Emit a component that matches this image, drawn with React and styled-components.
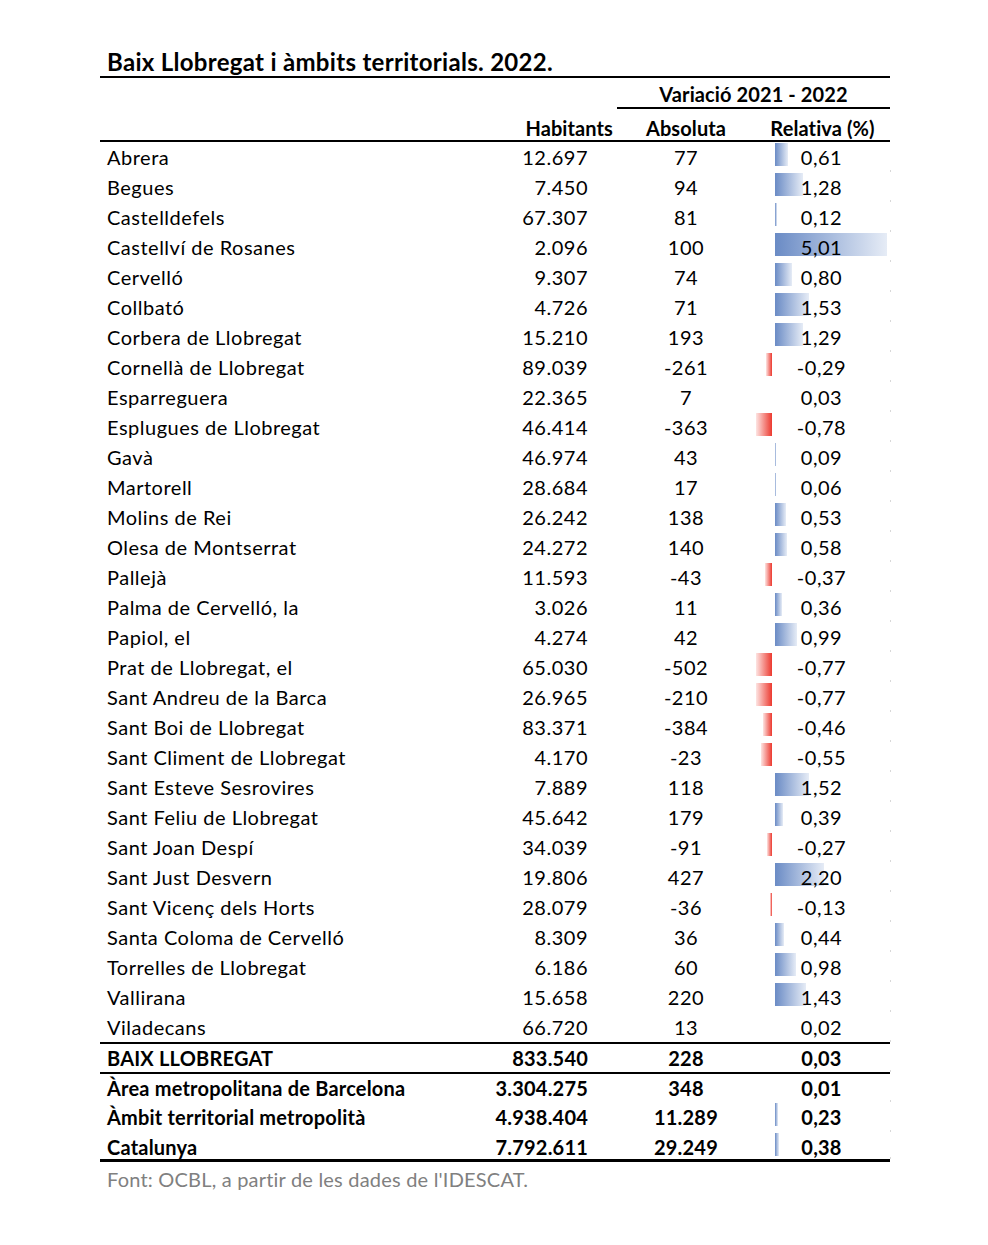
import React from "react";
import styled, { createGlobalStyle } from "styled-components";

const Global = createGlobalStyle`
  html, body { margin: 0; padding: 0; background: #fff; }
  body { font-family: Lato, "Open Sans", "Liberation Sans", sans-serif; color: #000; }
`;

const Page = styled.div`
  width: 988px;
  min-height: 1245px;
  padding-left: 100px;
  box-sizing: border-box;
`;

const Sheet = styled.div`
  width: 790px;
`;

const Title = styled.div`
  padding: 48px 0 0 7px;
  height: 28px;
  line-height: 28px;
  font-size: 24px;
  font-weight: 700;
  letter-spacing: 0.3px;
  border-bottom: 2px solid #000;
`;

const Grid = styled.div`
  display: grid;
  grid-template-columns: 382px 135px 138px 135px;
`;

const Group = styled.div`
  grid-column: 3 / 5;
  height: 26px;
  padding-top: 3px;
  line-height: 26px;
  text-align: center;
  font-size: 20px;
  font-weight: 700;
  letter-spacing: 0.1px;
  border-bottom: 2px solid #000;
`;

const Spacer = styled.div`
  grid-column: 1 / 3;
`;

const HeadRow = styled.div`
  grid-column: 1 / 5;
  display: grid;
  grid-template-columns: subgrid;
  height: 24px;
  padding-top: 7px;
  line-height: 24px;
  border-bottom: 2px solid #000;
`;

const HeadCell = styled.div`
  font-size: 20px;
  font-weight: 700;
  letter-spacing: 0.1px;
  text-align: ${(p) => p.$align || "center"};
  padding-right: ${(p) => p.$pr || 0}px;
`;

const Row = styled.div`
  grid-column: 1 / 5;
  display: grid;
  grid-template-columns: subgrid;
  height: 30px;
  box-sizing: border-box;
  line-height: ${(p) => (p.$topLine ? 28 : 30)}px;
  font-size: 20px;
  font-weight: ${(p) => (p.$bold ? 700 : 400)};
  letter-spacing: ${(p) => (p.$bold ? "0.2px" : "0.5px")};
  border-top: ${(p) => (p.$topLine ? "2px solid #000" : "none")};
  border-bottom: ${(p) => (p.$bottomLine ? "3px solid #000" : "none")};
  position: relative;
  &::after {
    content: "";
    position: absolute;
    right: -1px;
    bottom: 0;
    width: 1px;
    height: 2px;
    background: #d8d8d8;
  }
`;

const Name = styled.div`
  padding-left: 7px;
  white-space: nowrap;
`;

const Num = styled.div`
  text-align: right;
  padding-right: 29px;
`;

const Abs = styled.div`
  text-align: center;
`;

const Rel = styled.div`
  position: relative;
  text-align: center;
  padding-right: 2px;
`;

const Value = styled.span`
  position: relative;
  z-index: 1;
`;

const Bar = styled.div`
  position: absolute;
  top: 1px;
  height: 23px;
  background: ${(p) =>
    p.$neg
      ? "linear-gradient(to left, #ec3a30, #fde4e2)"
      : "linear-gradient(to right, #6a8bc5, #e6ecf6)"};
`;

const Footer = styled.div`
  padding: 5px 0 0 7px;
  line-height: 24px;
  font-size: 20px;
  color: #808080;
  letter-spacing: 0.2px;
`;

const data = [
  ["Abrera", "12.697", "77", "0,61"],
  ["Begues", "7.450", "94", "1,28"],
  ["Castelldefels", "67.307", "81", "0,12"],
  ["Castellví de Rosanes", "2.096", "100", "5,01"],
  ["Cervelló", "9.307", "74", "0,80"],
  ["Collbató", "4.726", "71", "1,53"],
  ["Corbera de Llobregat", "15.210", "193", "1,29"],
  ["Cornellà de Llobregat", "89.039", "-261", "-0,29"],
  ["Esparreguera", "22.365", "7", "0,03"],
  ["Esplugues de Llobregat", "46.414", "-363", "-0,78"],
  ["Gavà", "46.974", "43", "0,09"],
  ["Martorell", "28.684", "17", "0,06"],
  ["Molins de Rei", "26.242", "138", "0,53"],
  ["Olesa de Montserrat", "24.272", "140", "0,58"],
  ["Pallejà", "11.593", "-43", "-0,37"],
  ["Palma de Cervelló, la", "3.026", "11", "0,36"],
  ["Papiol, el", "4.274", "42", "0,99"],
  ["Prat de Llobregat, el", "65.030", "-502", "-0,77"],
  ["Sant Andreu de la Barca", "26.965", "-210", "-0,77"],
  ["Sant Boi de Llobregat", "83.371", "-384", "-0,46"],
  ["Sant Climent de Llobregat", "4.170", "-23", "-0,55"],
  ["Sant Esteve Sesrovires", "7.889", "118", "1,52"],
  ["Sant Feliu de Llobregat", "45.642", "179", "0,39"],
  ["Sant Joan Despí", "34.039", "-91", "-0,27"],
  ["Sant Just Desvern", "19.806", "427", "2,20"],
  ["Sant Vicenç dels Horts", "28.079", "-36", "-0,13"],
  ["Santa Coloma de Cervelló", "8.309", "36", "0,44"],
  ["Torrelles de Llobregat", "6.186", "60", "0,98"],
  ["Vallirana", "15.658", "220", "1,43"],
  ["Viladecans", "66.720", "13", "0,02"],
];

const totals = [
  ["BAIX LLOBREGAT", "833.540", "228", "0,03", 0],
  ["Àrea metropolitana de Barcelona", "3.304.275", "348", "0,01", 0],
  ["Àmbit territorial metropolità", "4.938.404", "11.289", "0,23", 3],
  ["Catalunya", "7.792.611", "29.249", "0,38", 4],
];

function DataBar({ value, fixed }) {
  const v = parseFloat(value.replace(",", "."));
  if (v >= 0) {
    const w = fixed !== undefined ? fixed : Math.round(v * 22.5 - 0.7);
    if (w <= 0) return null;
    return <Bar style={{ left: 20, width: w }} />;
  }
  const w = Math.round(-v * 21 - 0.4);
  if (w <= 0) return null;
  return <Bar $neg style={{ left: 17 - w, width: w }} />;
}

export default function App() {
  return (
    <Page>
      <Global />
      <Sheet>
        <Title>Baix Llobregat i àmbits territorials. 2022.</Title>
        <Grid>
          <Spacer />
          <Group>Variació 2021 - 2022</Group>
          <HeadRow>
            <div />
            <HeadCell $align="right" $pr={4}>Habitants</HeadCell>
            <HeadCell>Absoluta</HeadCell>
            <HeadCell>Relativa (%)</HeadCell>
          </HeadRow>
          {data.map(([n, h, a, r]) => (
            <Row key={n}>
              <Name>{n}</Name>
              <Num>{h}</Num>
              <Abs>{a}</Abs>
              <Rel>
                <DataBar value={r} />
                <Value>{r}</Value>
              </Rel>
            </Row>
          ))}
          {totals.map(([n, h, a, r, f], i) => (
            <Row
              key={n}
              $bold
              $topLine={i === 0 || i === 1}
              $bottomLine={i === totals.length - 1}
            >
              <Name>{n}</Name>
              <Num>{h}</Num>
              <Abs>{a}</Abs>
              <Rel>
                {f ? <DataBar value={r} fixed={f} /> : null}
                <Value>{r}</Value>
              </Rel>
            </Row>
          ))}
        </Grid>
        <Footer>Font: OCBL, a partir de les dades de l'IDESCAT.</Footer>
      </Sheet>
    </Page>
  );
}
